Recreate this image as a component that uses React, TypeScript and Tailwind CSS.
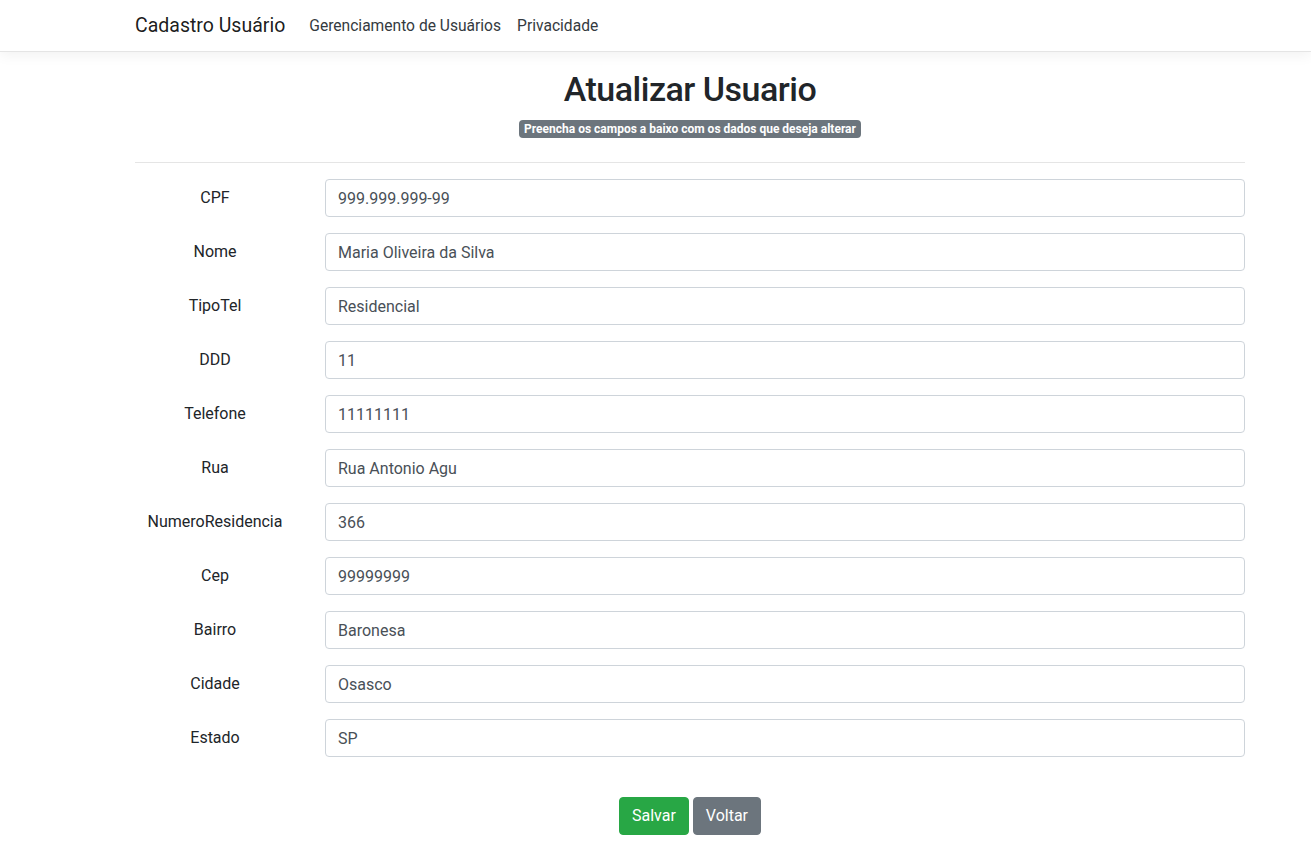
import React from "react";

const fields: [string, string][] = [
  ["CPF", "999.999.999-99"],
  ["Nome", "Maria Oliveira da Silva"],
  ["TipoTel", "Residencial"],
  ["DDD", "11"],
  ["Telefone", "11111111"],
  ["Rua", "Rua Antonio Agu"],
  ["NumeroResidencia", "366"],
  ["Cep", "99999999"],
  ["Bairro", "Baronesa"],
  ["Cidade", "Osasco"],
  ["Estado", "SP"],
];

export default function App() {
  return (
    <div className="min-h-screen bg-white text-[#212529] font-['Roboto','Liberation_Sans',sans-serif]">
      <nav className="h-[52px] bg-white border-b border-[#e5e5e5] shadow-[0_4px_12px_rgba(0,0,0,0.05)]">
        <div className="w-[1110px] ml-[135px] h-full flex items-center">
          <span className="text-[19.5px] text-black/90 mr-4 leading-[30px]">Cadastro Usuário</span>
          <a className="px-2 text-[15.6px] text-[#343a40] leading-6">Gerenciamento de Usuários</a>
          <a className="px-2 text-[15.6px] text-[#343a40] leading-6">Privacidade</a>
        </div>
      </nav>
      <main className="w-[1110px] ml-[135px]">
        <div className="text-center pt-4">
          <h1 className="text-[34px] font-medium leading-[42px] tracking-[-0.5px]">Atualizar Usuario</h1>
          <div className="mt-[10px] flex justify-center">
            <span className="flex items-center h-[18px] px-[5px] text-[12px] font-bold leading-none rounded-[4px] bg-[#6c757d] text-white">
              Preencha os campos a baixo com os dados que deseja alterar
            </span>
          </div>
        </div>
        <hr className="mt-6 border-0 border-t border-black/10" />
        <div className="pt-4">
          {fields.map(([label, value]) => (
            <div key={label} className="flex items-center gap-[30px] mb-4">
              <label className="w-[160px] text-center text-[16px] leading-6">{label}</label>
              <input
                readOnly
                value={value}
                className="flex-1 h-[38px] border border-[#ced4da] rounded-[4px] px-3 text-[16px] text-[#495057] outline-none"
              />
            </div>
          ))}
        </div>
        <div className="mt-10 flex justify-center gap-1">
          <button className="h-[38px] px-3 rounded-[4px] bg-[#28a745] border border-[#28a745] text-white text-[16px]">Salvar</button>
          <button className="h-[38px] px-3 rounded-[4px] bg-[#6c757d] border border-[#6c757d] text-white text-[16px]">Voltar</button>
        </div>
      </main>
    </div>
  );
}
